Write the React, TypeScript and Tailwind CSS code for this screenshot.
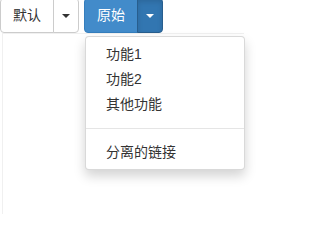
import React from 'react';

const font = { fontFamily: '"Liberation Sans", "Noto Sans CJK SC", sans-serif' };

const Caret = ({ white }: { white?: boolean }) => (
    <span
        className={`inline-block w-0 h-0 border-x-[4px] border-x-transparent border-t-[4px] align-middle ${white ? 'border-t-white' : 'border-t-[#333]'}`}
    />
);

const MenuItem = ({ label }: { label: string }) => (
    <li className="h-[25px] flex items-center px-5 text-[14px] text-[#333] whitespace-nowrap">{label}</li>
);

export default function App() {
    return (
        <div className="relative w-[311px] h-[214px] overflow-hidden bg-white" style={font}>
            {/* Buttons */}
            <div className="flex items-start gap-[5px] -mt-[2px]">
                <div className="flex">
                    <button className="h-[35px] px-3 border border-[#ccc] rounded-l-[4px] bg-white text-[14px] text-[#333]">
                        默认
                    </button>
                    <button className="h-[35px] w-[26px] -ml-px border border-[#ccc] rounded-r-[4px] bg-white flex items-center justify-center">
                        <Caret />
                    </button>
                </div>
                <div className="flex">
                    <button className="h-[35px] px-3 border border-[#357ebd] rounded-l-[4px] bg-[#428bca] text-[14px] text-white">
                        原始
                    </button>
                    <button className="h-[35px] w-[26px] -ml-px border border-[#285e8e] rounded-r-[4px] bg-[#3276b1] shadow-[inset_0_3px_5px_rgba(0,0,0,0.125)] flex items-center justify-center">
                        <Caret white />
                    </button>
                </div>
            </div>

            {/* faint area below */}
            <div className="ml-[2px] w-[242px] h-[200px] border-l border-t border-[#f0f0f0]" />

            {/* Dropdown menu */}
            <ul className="absolute left-[85px] top-[36px] w-[160px] bg-white border border-[rgba(0,0,0,0.15)] rounded-[4px] shadow-[0_6px_12px_rgba(0,0,0,0.175)] pt-[5px] pb-[4px]">
                <MenuItem label="功能1" />
                <MenuItem label="功能2" />
                <MenuItem label="其他功能" />
                <li className="h-px my-[11px] bg-[#e5e5e5]" />
                <MenuItem label="分离的链接" />
            </ul>
        </div>
    );
}
